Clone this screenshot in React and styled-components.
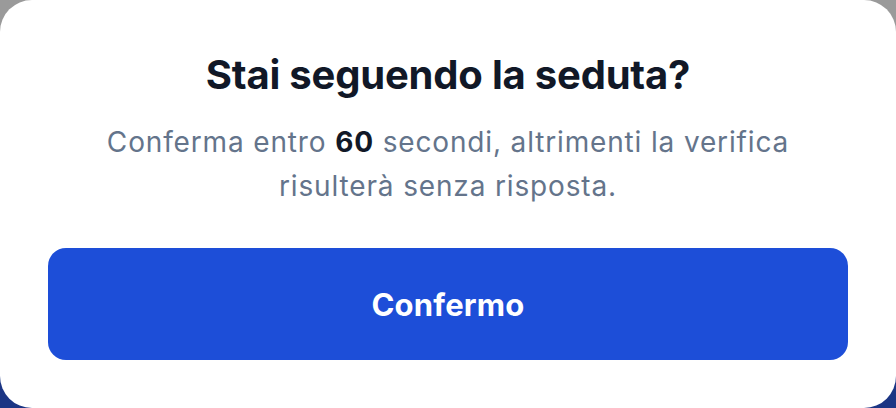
import React from 'react';
import styled, { createGlobalStyle } from 'styled-components';

const GlobalStyle = createGlobalStyle`
  html, body {
    margin: 0;
    padding: 0;
  }
  body {
    font-family: Inter, "Noto Sans", sans-serif;
    -webkit-font-smoothing: antialiased;
  }
`;

// dimmed page behind the dialog: grey on top, the navy footer below
const Overlay = styled.div`
  width: 896px;
  height: 408px;
  background: linear-gradient(to bottom, #9a9a9a 0%, #9a9a9a 50%, #1b3584 50%, #1b3584 100%);
  display: flex;
`;

const Dialog = styled.div`
  flex: 1;
  background: #fff;
  border-radius: 32px;
  padding: 51px 48px 48px;
  display: flex;
  flex-direction: column;
  align-items: center;
  text-align: center;
`;

const Title = styled.h2`
  margin: 0;
  font-size: 40px;
  line-height: 48px;
  font-weight: 700;
  color: #111827;
  letter-spacing: -0.2px;
`;

const Message = styled.p`
  margin: 21px 0 0;
  max-width: 720px;
  font-size: 28px;
  line-height: 44px;
  font-weight: 400;
  letter-spacing: 0.85px;
  color: #64748b;

  strong {
    color: #111827;
    font-weight: 700;
  }
`;

const ConfirmButton = styled.button`
  margin-top: auto;
  width: 100%;
  height: 112px;
  border: 0;
  border-radius: 18px;
  background: #1d4ed8;
  color: #fff;
  font-family: inherit;
  font-size: 31px;
  font-weight: 700;
  letter-spacing: 0.2px;
  cursor: pointer;
`;

const App = () => {
  return (
    <>
      <GlobalStyle />
      <Overlay>
        <Dialog>
          <Title>Stai seguendo la seduta?</Title>
          <Message>
            Conferma entro <strong>60</strong> secondi, altrimenti la verifica risulterà senza risposta.
          </Message>
          <ConfirmButton>Confermo</ConfirmButton>
        </Dialog>
      </Overlay>
    </>
  );
};

export default App;
